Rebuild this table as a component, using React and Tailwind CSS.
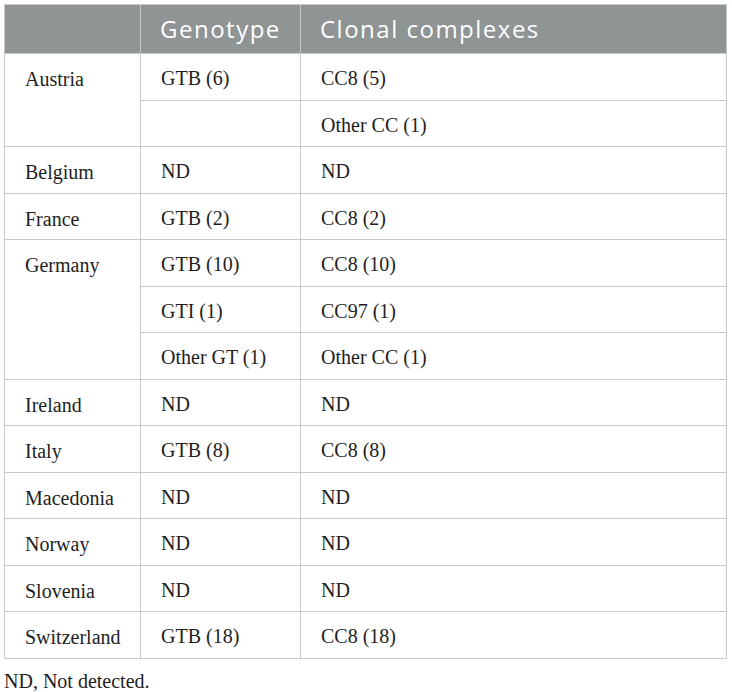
const rows = [
  { country: 'Austria', items: [['GTB (6)', 'CC8 (5)'], ['', 'Other CC (1)']] },
  { country: 'Belgium', items: [['ND', 'ND']] },
  { country: 'France', items: [['GTB (2)', 'CC8 (2)']] },
  { country: 'Germany', items: [['GTB (10)', 'CC8 (10)'], ['GTI (1)', 'CC97 (1)'], ['Other GT (1)', 'Other CC (1)']] },
  { country: 'Ireland', items: [['ND', 'ND']] },
  { country: 'Italy', items: [['GTB (8)', 'CC8 (8)']] },
  { country: 'Macedonia', items: [['ND', 'ND']] },
  { country: 'Norway', items: [['ND', 'ND']] },
  { country: 'Slovenia', items: [['ND', 'ND']] },
  { country: 'Switzerland', items: [['GTB (18)', 'CC8 (18)']] },
];

const cell = 'border border-[#c6cac8] pl-5 pr-2 h-[46.5px] pt-[3px] align-middle text-left font-normal';

export default function App() {
  return (
    <div className="bg-white w-[732px] h-[692px] pl-[4px] pt-[4px] text-[#1e1e1e] font-['Liberation_Serif',serif]">
      <table className="w-[723px] border-collapse table-fixed text-[20px] leading-6">
        <colgroup>
          <col className="w-[136px]" />
          <col className="w-[160px]" />
          <col />
        </colgroup>
        <thead>
          <tr className="bg-[#8f9494] text-white font-['Open_Sans',sans-serif] text-[24px] tracking-[1.5px]">
            <th className="border border-[#c6cac8] h-[49px] pl-[19px] text-left font-normal"></th>
            <th className="border border-[#c6cac8] h-[49px] pl-[19px] text-left font-normal">Genotype</th>
            <th className="border border-[#c6cac8] h-[49px] pl-[19px] text-left font-normal">Clonal complexes</th>
          </tr>
        </thead>
        <tbody>
          {rows.map((r) =>
            r.items.map((it, i) => (
              <tr key={r.country + i}>
                {i === 0 && (
                  <td rowSpan={r.items.length} className={cell + ' !align-top pt-[13px]'}>
                    {r.country}
                  </td>
                )}
                <td className={cell}>{it[0]}</td>
                <td className={cell}>{it[1]}</td>
              </tr>
            ))
          )}
        </tbody>
      </table>
      <p className="mt-[11px] text-[20px] leading-[22px]">ND, Not detected.</p>
    </div>
  );
}
